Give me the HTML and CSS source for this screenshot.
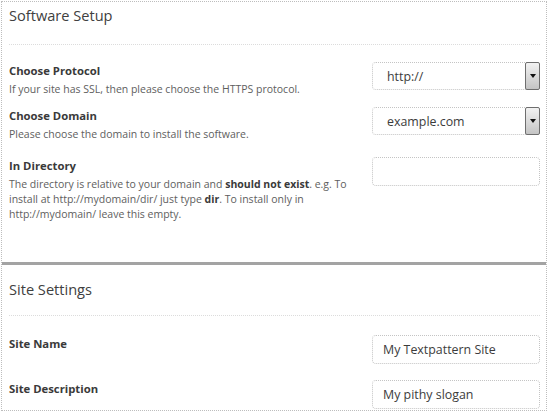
FILE: index.html
```html
<!DOCTYPE html>
<html>
<head>
<meta charset="utf-8">
<link rel="stylesheet" href="styles.css">
</head>
<body>
<div class="frame">
  <div class="section first">
    <h2 class="title">Software Setup</h2>
    <div class="row r1">
      <div class="text">
        <div class="label">Choose Protocol</div>
        <div class="desc">If your site has SSL, then please choose the HTTPS protocol.</div>
      </div>
      <div class="field select"><span class="value">http://</span><span class="arrow"></span></div>
    </div>
    <div class="row r2">
      <div class="text">
        <div class="label">Choose Domain</div>
        <div class="desc">Please choose the domain to install the software.</div>
      </div>
      <div class="field select"><span class="value">example.com</span><span class="arrow"></span></div>
    </div>
    <div class="row r3">
      <div class="text">
        <div class="label">In Directory</div>
        <div class="desc">The directory is relative to your domain and <b>should not exist</b>. e.g. To install at http://mydomain/dir/ just type <b>dir</b>. To install only in http://mydomain/ leave this empty.</div>
      </div>
      <div class="field input"></div>
    </div>
  </div>
  <div class="divider"></div>
  <div class="section second">
    <h2 class="title">Site Settings</h2>
    <div class="row s1">
      <div class="text"><div class="label">Site Name</div></div>
      <div class="field input"><span class="value">My Textpattern Site</span></div>
    </div>
    <div class="row s2">
      <div class="text"><div class="label">Site Description</div></div>
      <div class="field input"><span class="value">My pithy slogan</span></div>
    </div>
  </div>
</div>
</body>
</html>
```
FILE: styles.css
```css
* { box-sizing: border-box; }
html, body { margin: 0; padding: 0; background: #fff; }
body {
  font-family: "Open Sans", "DejaVu Sans", sans-serif;
  color: #333;
  width: 550px;
  height: 412px;
  overflow: hidden;
}
.frame {
  margin: 1px 0 0 1px;
  width: 546px;
  height: 410px;
  border: 1px dotted #bdbdbd;
  overflow: hidden;
}
.section { padding: 0 6px 0 7px; }
.title {
  margin: 0;
  font-size: 14.6px;
  font-weight: normal;
  color: #404040;
  line-height: 20px;
  border-bottom: 1px dotted #dcdcdc;
}
.first .title { padding: 3px 0 19px; }
.second .title { padding: 14px 0 16px; }
.row {
  display: flex;
  justify-content: space-between;
  align-items: flex-start;
}
.text { flex: 1; padding-right: 24px; }
.label {
  font-size: 11.3px;
  font-weight: bold;
  color: #3a3a3a;
  line-height: 18px;
}
.desc {
  font-size: 10.5px;
  color: #5e5e5e;
  line-height: 15px;
  margin-top: 2px;
}
.desc b { color: #3a3a3a; }
.r1 { margin-top: 17px; }
.r2 { margin-top: 10px; }
.r3 { margin-top: 15px; padding-bottom: 40px; }
.s1 { margin-top: 19px; }
.s2 { margin-top: 16px; }
.field {
  flex: none;
  width: 168px;
  height: 29px;
  border: 1px dotted #c4c4c4;
  border-radius: 4px;
  display: flex;
  align-items: center;
  font-size: 12.4px;
  color: #3c3c3c;
  background: #fff;
}
.select { height: 28px; }
.select .value { padding-left: 14px; flex: 1; }
.input .value { padding-left: 10px; }
.arrow {
  width: 15px;
  height: 28px;
  margin-right: -1px;
  border: 1px solid #6e6e6e;
  border-radius: 2px;
  background: linear-gradient(#f2f2f2, #c4c4c4);
  display: flex;
  align-items: center;
  justify-content: center;
}
.arrow::after {
  content: "";
  width: 0;
  height: 0;
  border-left: 3px solid transparent;
  border-right: 3px solid transparent;
  border-top: 4px solid #111;
}
.divider {
  height: 3px;
  background: #a3a3a3;
  margin: 0;
}
```
